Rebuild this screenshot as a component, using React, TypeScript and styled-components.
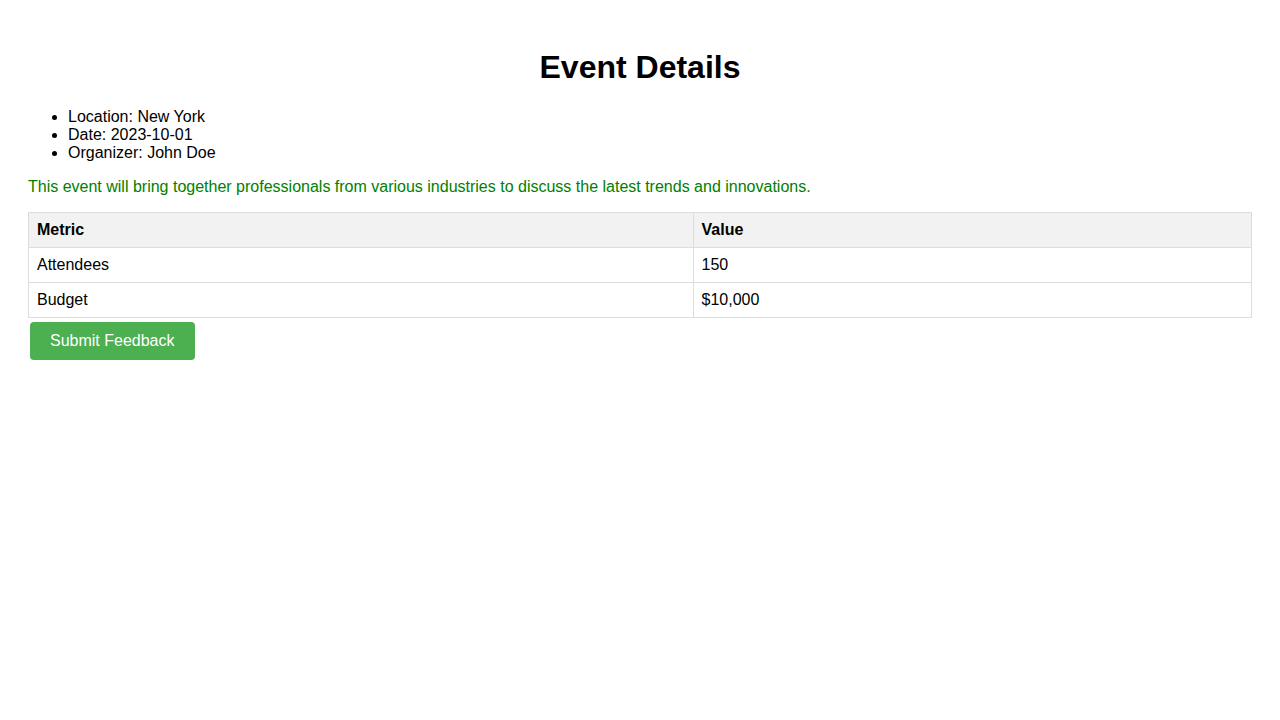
import React from "react";
import styled, { createGlobalStyle } from "styled-components";

const Global = createGlobalStyle`
  body {
    margin: 8px;
    font-family: "Liberation Sans", Arial, sans-serif;
    background: #fff;
    color: #000;
  }
`;

const Container = styled.div`
  padding: 20px;
`;

const Title = styled.h1`
  text-align: center;
  font-size: 32px;
  font-weight: bold;
  margin: 21.44px 0;
`;

const List = styled.ul`
  margin: 16px 0;
  padding-left: 40px;
  font-size: 16px;
`;

const Description = styled.p`
  color: green;
  font-size: 16px;
  margin: 16px 0;
`;

const Table = styled.table`
  width: 100%;
  border-collapse: collapse;
  font-size: 16px;
`;

const Th = styled.th`
  border: 1px solid #ddd;
  padding: 8px;
  text-align: left;
  background-color: #f2f2f2;
  font-weight: bold;
`;

const Td = styled.td`
  border: 1px solid #ddd;
  padding: 8px;
  text-align: left;
`;

const Button = styled.button`
  background-color: #4caf50;
  color: #fff;
  border: none;
  border-radius: 4px;
  padding: 10px 20px;
  margin: 4px 2px;
  font-family: "Liberation Sans", Arial, sans-serif;
  font-size: 16px;
  cursor: pointer;
`;

export default function App() {
  return (
    <>
      <Global />
      <Container>
        <Title>Event Details</Title>
        <List>
          <li>Location: New York</li>
          <li>Date: 2023-10-01</li>
          <li>Organizer: John Doe</li>
        </List>
        <Description>
          This event will bring together professionals from various industries to discuss the latest trends and innovations.
        </Description>
        <Table>
          <thead>
            <tr>
              <Th>Metric</Th>
              <Th>Value</Th>
            </tr>
          </thead>
          <tbody>
            <tr>
              <Td>Attendees</Td>
              <Td>150</Td>
            </tr>
            <tr>
              <Td>Budget</Td>
              <Td>$10,000</Td>
            </tr>
          </tbody>
        </Table>
        <Button>Submit Feedback</Button>
      </Container>
    </>
  );
}
